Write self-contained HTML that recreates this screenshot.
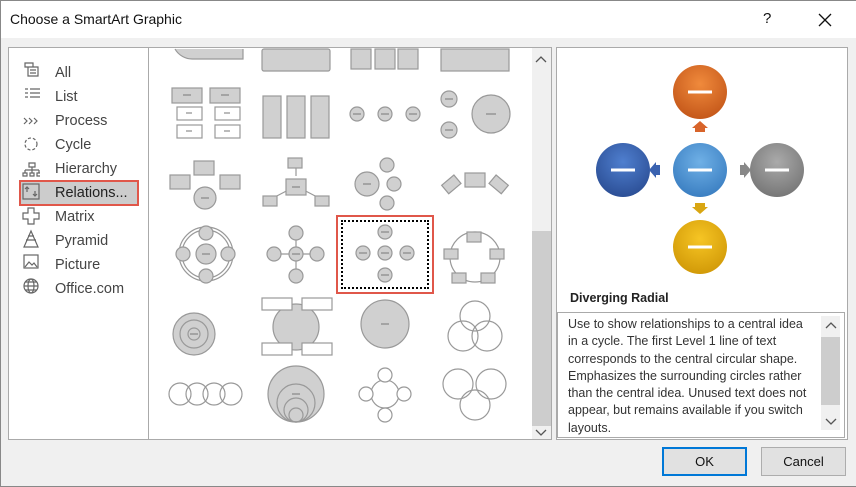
<!DOCTYPE html>
<html><head><style>
body{margin:0;width:856px;height:486px;overflow:hidden;background:#f0f0f0;font-family:"Liberation Sans",sans-serif;position:relative}
.abs{position:absolute}
.t{font-size:14px;color:#444}
</style></head><body>
<div class="abs" style="left:0;top:0;width:856px;height:38px;background:#fff"></div>
<div class="abs" style="left:0;top:0;width:855px;height:485px;border:1px solid #888;box-sizing:content-box;pointer-events:none"></div>
<div class="abs" style="left:10px;top:11px;font-size:14px;color:#111">Choose a SmartArt Graphic</div>
<div class="abs" style="left:763px;top:10px;font-size:15px;color:#111">?</div>
<svg class="abs" style="left:817px;top:12px" width="16" height="16"><path d="M2 2L14 14M14 2L2 14" stroke="#111" stroke-width="1.3"/></svg>

<div class="abs" style="left:8px;top:47px;width:141px;height:393px;background:#fff;border:1px solid #aaa;box-sizing:border-box"></div>
<div class="abs" style="left:19px;top:180px;width:120px;height:26px;background:#ccc;border:2px solid #e0574a;box-sizing:border-box"></div>
<svg class="abs" style="left:20px;top:60px" width="20" height="240" fill="none" stroke="#666" stroke-width="1.2">
<path d="M5 3h8v4h-8zM8 7v9h10v-9z M10 10h6M10 13h6"/>
<path d="M5 29h3M10 29h10M5 33h3M10 33h10M5 37h3M10 37h10"/>
<path d="M4 58l3 3-3 3M9 58l3 3-3 3M14 58l3 3-3 3"/>
<circle cx="11" cy="84" r="6" stroke-dasharray="3 2"/>
<path d="M9 103h6v4h-6zM12 107v3M5 110h14M5 110v3M12 110v3M19 110v3M3 113h4v3h-4zM10 113h4v3h-4zM17 113h4v3h-4z"/>
<rect x="3" y="124" width="16" height="15"/><path d="M7 127v5M5 129l2-2 2 2M15 136v-5M13 134l2 2 2-2"/>
<path d="M8 148h6v5h5v6h-5v5h-6v-5h-5v-6h5z"/>
<path d="M11 171l-7 16h14z M6 180h10M8 176h6"/>
<rect x="4" y="195" width="14" height="13"/><path d="M5 207l4-5 3 3 2-2 3 4"/>
<circle cx="11" cy="226" r="7"/><ellipse cx="11" cy="226" rx="3" ry="7"/><path d="M4 226h14M5 222h12M5 230h12"/>
</svg>
<div class="abs t" style="left:55px;top:61px;line-height:24px;font-size:14.5px">All<br>List<br>Process<br>Cycle<br>Hierarchy<br><span style="color:#222">Relations...</span><br>Matrix<br>Pyramid<br>Picture<br>Office.com</div>

<div class="abs" style="left:149px;top:47px;width:403px;height:393px;background:#fff;border:1px solid #aaa;border-left:none;box-sizing:border-box;overflow:hidden">
<svg width="403" height="393" style="position:absolute;left:0;top:0" fill="#d0d0d0" stroke="#999" stroke-width="1.2">
<g transform="translate(-149,-47)">
<path d="M175 48a20 20 0 0 0 18 10h50v-10" /><rect x="262" y="48" width="68" height="22" rx="2"/><rect x="351" y="48" width="20" height="20"/><rect x="375" y="48" width="20" height="20"/><rect x="398" y="48" width="20" height="20"/><rect x="441" y="48" width="68" height="22"/>
<rect x="172" y="87" width="30" height="15"/><rect x="210" y="87" width="30" height="15"/>
<rect x="177" y="106" width="25" height="13" fill="#fff"/><rect x="177" y="124" width="25" height="13" fill="#fff"/><rect x="215" y="106" width="25" height="13" fill="#fff"/><rect x="215" y="124" width="25" height="13" fill="#fff"/>
<rect x="263" y="95" width="18" height="42"/><rect x="287" y="95" width="18" height="42"/><rect x="311" y="95" width="18" height="42"/>
<circle cx="357" cy="113" r="7"/><circle cx="385" cy="113" r="7"/><circle cx="413" cy="113" r="7"/>
<circle cx="449" cy="98" r="8"/><circle cx="449" cy="129" r="8"/><circle cx="491" cy="113" r="19"/>
<rect x="170" y="174" width="20" height="14"/><rect x="194" y="160" width="20" height="14"/><rect x="220" y="174" width="20" height="14"/><circle cx="205" cy="197" r="11"/>
<path d="M296 175v-16M296 185l-25 13M296 185l25 13" fill="none"/><rect x="288" y="157" width="14" height="10"/><rect x="286" y="178" width="20" height="16"/><rect x="263" y="195" width="14" height="10"/><rect x="315" y="195" width="14" height="10"/>
<circle cx="367" cy="183" r="12"/><circle cx="387" cy="164" r="7"/><circle cx="394" cy="183" r="7"/><circle cx="387" cy="202" r="7"/>
<rect x="465" y="172" width="20" height="14"/><rect x="443" y="178" width="16" height="11" transform="rotate(-40 451 183)"/><rect x="491" y="178" width="16" height="11" transform="rotate(40 499 183)"/>
<circle cx="206" cy="253" r="27" fill="none"/><circle cx="206" cy="253" r="24" fill="none"/><circle cx="206" cy="253" r="10"/><circle cx="206" cy="232" r="7"/><circle cx="206" cy="275" r="7"/><circle cx="183" cy="253" r="7"/><circle cx="228" cy="253" r="7"/>
<path d="M296 232v43M273 253h45" fill="none"/><circle cx="296" cy="232" r="7"/><circle cx="296" cy="253" r="7"/><circle cx="296" cy="275" r="7"/><circle cx="274" cy="253" r="7"/><circle cx="317" cy="253" r="7"/>
<circle cx="385" cy="252" r="7"/><circle cx="385" cy="231" r="7"/><circle cx="385" cy="274" r="7"/><circle cx="363" cy="252" r="7"/><circle cx="407" cy="252" r="7"/>
<circle cx="475" cy="256" r="25" fill="none"/><rect x="467" y="231" width="14" height="10"/><rect x="444" y="248" width="14" height="10"/><rect x="490" y="248" width="14" height="10"/><rect x="452" y="272" width="14" height="10"/><rect x="481" y="272" width="14" height="10"/>
<circle cx="194" cy="333" r="21"/><circle cx="194" cy="333" r="14" fill="none"/><circle cx="194" cy="333" r="6" fill="none"/>
<circle cx="296" cy="326" r="23"/><rect x="262" y="297" width="30" height="12" fill="#fff"/><rect x="302" y="297" width="30" height="12" fill="#fff"/><rect x="262" y="342" width="30" height="12" fill="#fff"/><rect x="302" y="342" width="30" height="12" fill="#fff"/>
<circle cx="385" cy="323" r="24"/>
<circle cx="475" cy="315" r="15" fill="none"/><circle cx="463" cy="335" r="15" fill="none"/><circle cx="487" cy="335" r="15" fill="none"/>
<circle cx="180" cy="393" r="11" fill="none"/><circle cx="197" cy="393" r="11" fill="none"/><circle cx="214" cy="393" r="11" fill="none"/><circle cx="231" cy="393" r="11" fill="none"/>
<circle cx="296" cy="393" r="28"/><circle cx="296" cy="402" r="19" fill="none"/><circle cx="296" cy="409" r="12" fill="none"/><circle cx="296" cy="414" r="7" fill="none"/>
<circle cx="385" cy="393" r="14" fill="none"/><circle cx="385" cy="374" r="7" fill="#fff"/><circle cx="385" cy="414" r="7" fill="#fff"/><circle cx="366" cy="393" r="7" fill="#fff"/><circle cx="404" cy="393" r="7" fill="#fff"/>
<circle cx="458" cy="383" r="15" fill="none"/><circle cx="491" cy="383" r="15" fill="none"/><circle cx="475" cy="404" r="15" fill="none"/>
<g stroke="#777" stroke-width="1"><path d="M183 94h8M221 94h8M186 112h6M224 112h6M186 130h6M224 130h6M353 113h8M381 113h8M409 113h8M445 98h8M445 129h8M486 113h10M201 197h8M292 186h8M363 183h8M202 253h8M292 253h8M381 252h8M381 231h8M381 274h8M359 252h8M403 252h8M190 333h8M381 323h8M292 393h8"/></g>
</g>
</svg>
<div class="abs" style="left:187px;top:167px;width:98px;height:79px;border:2px solid #e0574a;box-sizing:border-box"></div>
<div class="abs" style="left:192px;top:172px;width:88px;height:69px;border:2px dotted #000;box-sizing:border-box"></div>
<div class="abs" style="left:383px;top:0;width:19px;height:393px;background:#f0f0f0"></div>
<div class="abs" style="left:383px;top:183px;width:19px;height:195px;background:#cdcdcd"></div>
<svg class="abs" style="left:386px;top:8px" width="12" height="8"><path d="M1 6l5-5 5 5" fill="none" stroke="#555" stroke-width="1.3"/></svg>
<svg class="abs" style="left:386px;top:380px" width="12" height="8"><path d="M1 2l5 5 5-5" fill="none" stroke="#555" stroke-width="1.3"/></svg>
</div>

<div class="abs" style="left:556px;top:47px;width:292px;height:393px;background:#fff;border:1px solid #aaa;box-sizing:border-box"></div>
<svg class="abs" style="left:556px;top:47px" width="292" height="260">
<defs>
<radialGradient id="o" cx=".5" cy=".35" r=".65"><stop offset="0" stop-color="#f08a3c"/><stop offset="1" stop-color="#c5581a"/></radialGradient>
<radialGradient id="b" cx=".5" cy=".35" r=".65"><stop offset="0" stop-color="#4f7fcf"/><stop offset="1" stop-color="#2c4f96"/></radialGradient>
<radialGradient id="c" cx=".5" cy=".35" r=".65"><stop offset="0" stop-color="#6fb0e6"/><stop offset="1" stop-color="#3b7fc2"/></radialGradient>
<radialGradient id="g" cx=".5" cy=".35" r=".65"><stop offset="0" stop-color="#aaa"/><stop offset="1" stop-color="#777"/></radialGradient>
<radialGradient id="y" cx=".5" cy=".35" r=".65"><stop offset="0" stop-color="#f6c524"/><stop offset="1" stop-color="#d29a08"/></radialGradient>
</defs>
<circle cx="144" cy="45" r="27" fill="url(#o)"/>
<circle cx="67" cy="123" r="27" fill="url(#b)"/>
<circle cx="144" cy="123" r="27" fill="url(#c)"/>
<circle cx="221" cy="123" r="27" fill="url(#g)"/>
<circle cx="144" cy="200" r="27" fill="url(#y)"/>
<g stroke="#fff" stroke-width="3"><path d="M132 45h24M55 123h24M132 123h24M209 123h24M132 200h24"/></g>
<path d="M139 85v-4h-3l8-7 8 7h-3v4z" fill="#d8642a"/>
<path d="M104 118h-4v-3l-7 8 7 8v-3h4z" fill="#3a62b0"/>
<path d="M184 118h4v-3l7 8-7 8v-3h-4z" fill="#888"/>
<path d="M139 156v4h-3l8 7 8-7h-3v-4z" fill="#d9a612"/>
</svg>
<div class="abs" style="left:570px;top:291px;font-size:12.5px;font-weight:bold;color:#222">Diverging Radial</div>
<div class="abs" style="left:557px;top:312px;width:288px;height:126px;border:1px solid #aaa;box-sizing:border-box;overflow:hidden;background:#fff">
<div style="position:absolute;left:10px;top:3px;width:244px;font-size:12.5px;line-height:17.3px;color:#333">Use to show relationships to a central idea in a cycle. The first Level 1 line of text corresponds to the central circular shape. Emphasizes the surrounding circles rather than the central idea. Unused text does not appear, but remains available if you switch layouts.</div>
<div style="position:absolute;left:263px;top:3px;width:19px;height:114px;background:#f0f0f0"></div>
<div style="position:absolute;left:263px;top:24px;width:19px;height:68px;background:#cdcdcd"></div>
<svg style="position:absolute;left:267px;top:9px" width="12" height="8"><path d="M1 6l5-5 5 5" fill="none" stroke="#555" stroke-width="1.3"/></svg>
<svg style="position:absolute;left:267px;top:104px" width="12" height="8"><path d="M1 2l5 5 5-5" fill="none" stroke="#555" stroke-width="1.3"/></svg>
</div>

<div class="abs" style="left:662px;top:447px;width:85px;height:29px;background:#e1e1e1;border:2px solid #0078d7;box-sizing:border-box;font-size:13px;color:#111;text-align:center;line-height:25px">OK</div>
<div class="abs" style="left:761px;top:447px;width:85px;height:29px;background:#e1e1e1;border:1px solid #adadad;box-sizing:border-box;font-size:13px;color:#111;text-align:center;line-height:27px">Cancel</div>
</body></html>
